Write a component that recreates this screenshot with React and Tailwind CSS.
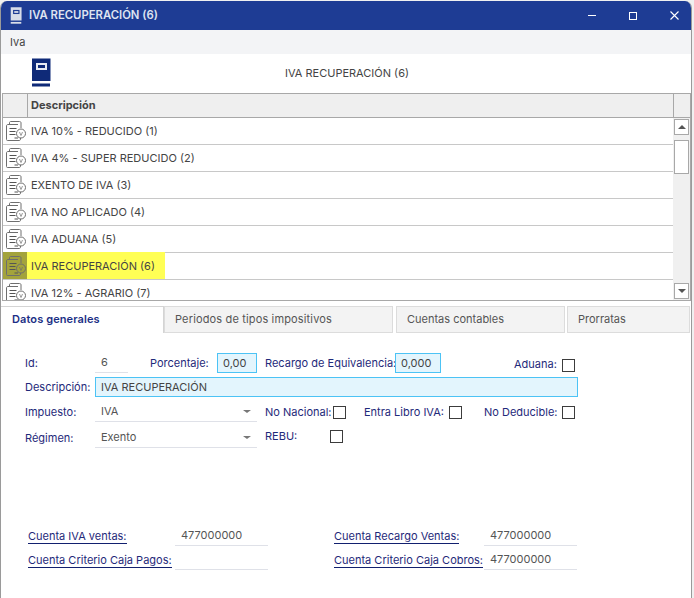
const rows = [
  "IVA 10% - REDUCIDO (1)",
  "IVA 4% - SUPER REDUCIDO (2)",
  "EXENTO DE IVA (3)",
  "IVA NO APLICADO (4)",
  "IVA ADUANA (5)",
  "IVA RECUPERACIÓN (6)",
  "IVA 12% - AGRARIO (7)",
];

function BookIcon({ className, fill, hole }) {
  return (
    <svg viewBox="0 0 20 29" className={className}>
      <path d="M1 0.5 H19.5 V23 H1 Z" fill={fill} />
      <rect x="5" y="5" width="11" height="7" fill={hole} />
      <rect x="7" y="7" width="7" height="3" fill={fill} />
      <rect x="1" y="25.5" width="18" height="3" fill={fill} />
    </svg>
  );
}

function DocIcon() {
  return (
    <svg viewBox="0 0 20 21" className="w-[20px] h-[21px]" fill="none" stroke="#6e6e6e" strokeWidth="1">
      <path d="M3.5 3.5 V1.5 C3.5 1 4 .5 4.5 .5 H13.5 C14.5 .5 15 1 15 2 V7" />
      <path d="M2 3.5 H12 M2 3.5 C1 3.5 .5 4 .5 5 V18.5 C.5 19.5 1 19.5 2 19.5 H13 C14 19.5 14.5 19 14.5 18 V17" />
      <path d="M3.5 7.5 H10.5 M3.5 10.5 H9.5 M3.5 13.5 H9.5 M8.5 17 H12" stroke="#555" />
      <circle cx="15" cy="12.5" r="4.5" />
      <path d="M13.5 11 L15 14.5 L16.5 11" strokeWidth="0.7" />
    </svg>
  );
}

function Arrow({ up }) {
  return (
    <div className={`w-0 h-0 border-x-[4px] border-x-transparent ${up ? "border-b-[4px] border-b-[#555]" : "border-t-[4px] border-t-[#555]"}`} />
  );
}

function Check({ className = "" }) {
  return <div className={`w-[13px] h-[13px] border border-[#3c3c3c] bg-white shrink-0 ${className}`} />;
}

function Label({ children, className = "" }) {
  return <span className={`text-[#1f2a7a] whitespace-nowrap ${className}`}>{children}</span>;
}

function Underlined({ value, className = "" }) {
  return (
    <div className={`h-[20px] border-b border-[#dfe1e8] pl-[6px] leading-[19px] text-[#555] ${className}`}>{value}</div>
  );
}

function Select({ value }) {
  return (
    <div className="w-[162px] h-[20px] border-b border-[#dfe1e8] pl-[6px] pr-[6px] flex items-center justify-between text-[#555]">
      {value}
      <div className="w-0 h-0 border-x-[4px] border-x-transparent border-t-[3px] border-t-[#777]" />
    </div>
  );
}

function Blue({ value, className = "" }) {
  return (
    <div className={`h-[20px] border border-[#4cc3f5] bg-[#e3f5fd] pl-[5px] leading-[18px] text-[#444] ${className}`}>{value}</div>
  );
}

function Account({ label, value, labelWidth, inputWidth }) {
  return (
    <div className="flex items-start h-[24px]">
      <div className={labelWidth}>
        <span className="text-[#1f2a7a] border-b border-[#12206f] leading-[13px] inline-block mt-[4px] whitespace-nowrap">{label}</span>
      </div>
      <Underlined value={value} className={inputWidth} />
    </div>
  );
}

export default function App() {
  return (
    <div className="w-[694px] h-[598px] bg-[#f0f0f0] overflow-hidden text-[11px]" style={{ fontFamily: "Inter, sans-serif" }}>
      <div className="w-[692px] h-[598px] mt-[1px] bg-white border-l border-[#9a9a9a] border-r rounded-t-[7px] overflow-hidden flex flex-col">
        <div className="h-[29px] bg-[#1e3c94] flex items-center shrink-0">
          <BookIcon className="w-[12px] h-[17px] ml-[9px]" fill="#d8dde9" hole="#1e3c94" />
          <span className="ml-[7px] text-[#dfe4f1] font-semibold text-[11.3px]">IVA RECUPERACIÓN (6)</span>
          <div className="ml-auto flex items-center pr-[12px] gap-[33px]">
            <div className="w-[8px] h-[1px] bg-white" />
            <div className="w-[8px] h-[8px] border border-white" />
            <svg viewBox="0 0 9 9" className="w-[9px] h-[9px]" stroke="#fff" strokeWidth="1.1">
              <path d="M.5 .5 L8.5 8.5 M8.5 .5 L.5 8.5" />
            </svg>
          </div>
        </div>
        <div className="h-[24px] bg-[#f3f4f6] shrink-0 pl-[9px] leading-[25px] text-[#444]">Iva</div>
        <div className="h-[39px] shrink-0 relative flex items-center justify-center">
          <BookIcon className="absolute left-[30px] top-[4px] w-[20px] h-[29px]" fill="#0f2a78" hole="#e8ebf4" />
          <span className="text-[#444] pl-[2px]">IVA RECUPERACIÓN (6)</span>
        </div>
        <div className="ml-[1px] h-[208px] border border-[#a8a8a8] shrink-0 flex flex-col">
          <div className="h-[24px] shrink-0 bg-[#efefef] border-b border-[#a8a8a8] flex">
            <div className="w-[25px] border-r border-[#a8a8a8]" />
            <div className="flex-1 pl-[3px] leading-[22px] font-bold text-[#444]">Descripción</div>
            <div className="w-[17px] border-l border-[#a8a8a8]" />
          </div>
          <div className="flex-1 flex min-h-0">
            <div className="flex-1 overflow-hidden">
              {rows.map((r, i) => (
                <div key={r} className="h-[27px] border-b border-[#c8c8c8] flex relative">
                  {i === 5 && <div className="absolute left-[-1px] top-[-1px] h-[27px] w-[163px] bg-[#ffff55]" />}
                  {i === 5 && <div className="absolute left-[-1px] top-[-1px] h-[27px] w-[25px] bg-[#a3a33c]" />}
                  <div className="w-[25px] relative flex items-center pl-[3px]">
                    <DocIcon />
                  </div>
                  <div className="relative pl-[3px] leading-[26px] text-[#444]">{r}</div>
                </div>
              ))}
            </div>
            <div className="w-[17px] bg-[#f0f0f0] flex flex-col items-center pt-[1px] pb-[1px] relative">
              <div className="w-[15px] h-[16px] bg-white border border-[#a8a8a8] flex items-center justify-center"><Arrow up /></div>
              <div className="w-[15px] h-[34px] mt-[5px] bg-white border border-[#a8a8a8]" />
              <div className="w-[15px] h-[16px] mt-auto bg-white border border-[#a8a8a8] flex items-center justify-center"><Arrow /></div>
            </div>
          </div>
        </div>
        <div className="h-[27px] mt-[5px] mb-[1px] shrink-0 flex text-[#555]">
          <div className="w-[163px] border-t border-r border-[#d4d4d4] leading-[25px] pl-[11px] font-semibold text-[#1c2f85] tracking-[0.1px]">Datos generales</div>
          <div className="w-[229px] bg-[#f3f3f3] border border-[#dcdcdc] leading-[25px] pl-[10px] tracking-[0.15px]">Periodos de tipos impositivos</div>
          <div className="w-[169px] ml-[3px] bg-[#f3f3f3] border border-[#dcdcdc] leading-[25px] pl-[10px]">Cuentas contables</div>
          <div className="w-[123px] ml-[2px] bg-[#f3f3f3] border border-[#dcdcdc] leading-[25px] pl-[10px]">Prorratas</div>
        </div>
        <div className="flex-1 flex flex-col pl-[24px]">
          <div className="flex items-center h-[20px] mt-[19px]">
            <Label className="w-[70px]">Id:</Label>
            <Underlined value="6" className="w-[33px]" />
            <Label className="ml-[22px] w-[67px]">Porcentaje:</Label>
            <Blue value="0,00" className="w-[40px]" />
            <Label className="ml-[8px] w-[130px]">Recargo de Equivalencia:</Label>
            <Blue value="0,000" className="w-[46px]" />
            <Label className="ml-[73px] w-[48px] mt-[2px]">Aduana:</Label>
            <Check className="mt-[4px]" />
          </div>
          <div className="flex items-center h-[20px] mt-[4px]">
            <Label className="w-[70px]">Descripción:</Label>
            <Blue value="IVA RECUPERACIÓN" className="w-[483px]" />
          </div>
          <div className="flex items-center h-[20px] mt-[5px]">
            <Label className="w-[70px]">Impuesto:</Label>
            <Select value="IVA" />
            <Label className="ml-[8px] w-[68px]">No Nacional:</Label>
            <Check />
            <Label className="ml-[18px] w-[85px]">Entra Libro IVA:</Label>
            <Check />
            <Label className="ml-[22px] w-[78px]">No Deducible:</Label>
            <Check />
          </div>
          <div className="flex items-center h-[20px] mt-[6px]">
            <Label className="w-[70px]">Régimen:</Label>
            <Select value="Exento" />
            <Label className="ml-[8px] w-[65px] -mt-[3px]">REBU:</Label>
            <Check className="-mt-[3px]" />
          </div>
          <div className="flex mt-[78px] pl-[3px]">
            <div className="flex flex-col w-[306px]">
              <Account label="Cuenta IVA ventas:" value="477000000" labelWidth="w-[147px]" inputWidth="w-[93px]" />
              <Account label="Cuenta Criterio Caja Pagos:" value="" labelWidth="w-[147px]" inputWidth="w-[93px]" />
            </div>
            <div className="flex flex-col">
              <Account label="Cuenta Recargo Ventas:" value="477000000" labelWidth="w-[150px]" inputWidth="w-[93px]" />
              <Account label="Cuenta Criterio Caja Cobros:" value="477000000" labelWidth="w-[150px]" inputWidth="w-[93px]" />
            </div>
          </div>
        </div>
      </div>
    </div>
  );
}
